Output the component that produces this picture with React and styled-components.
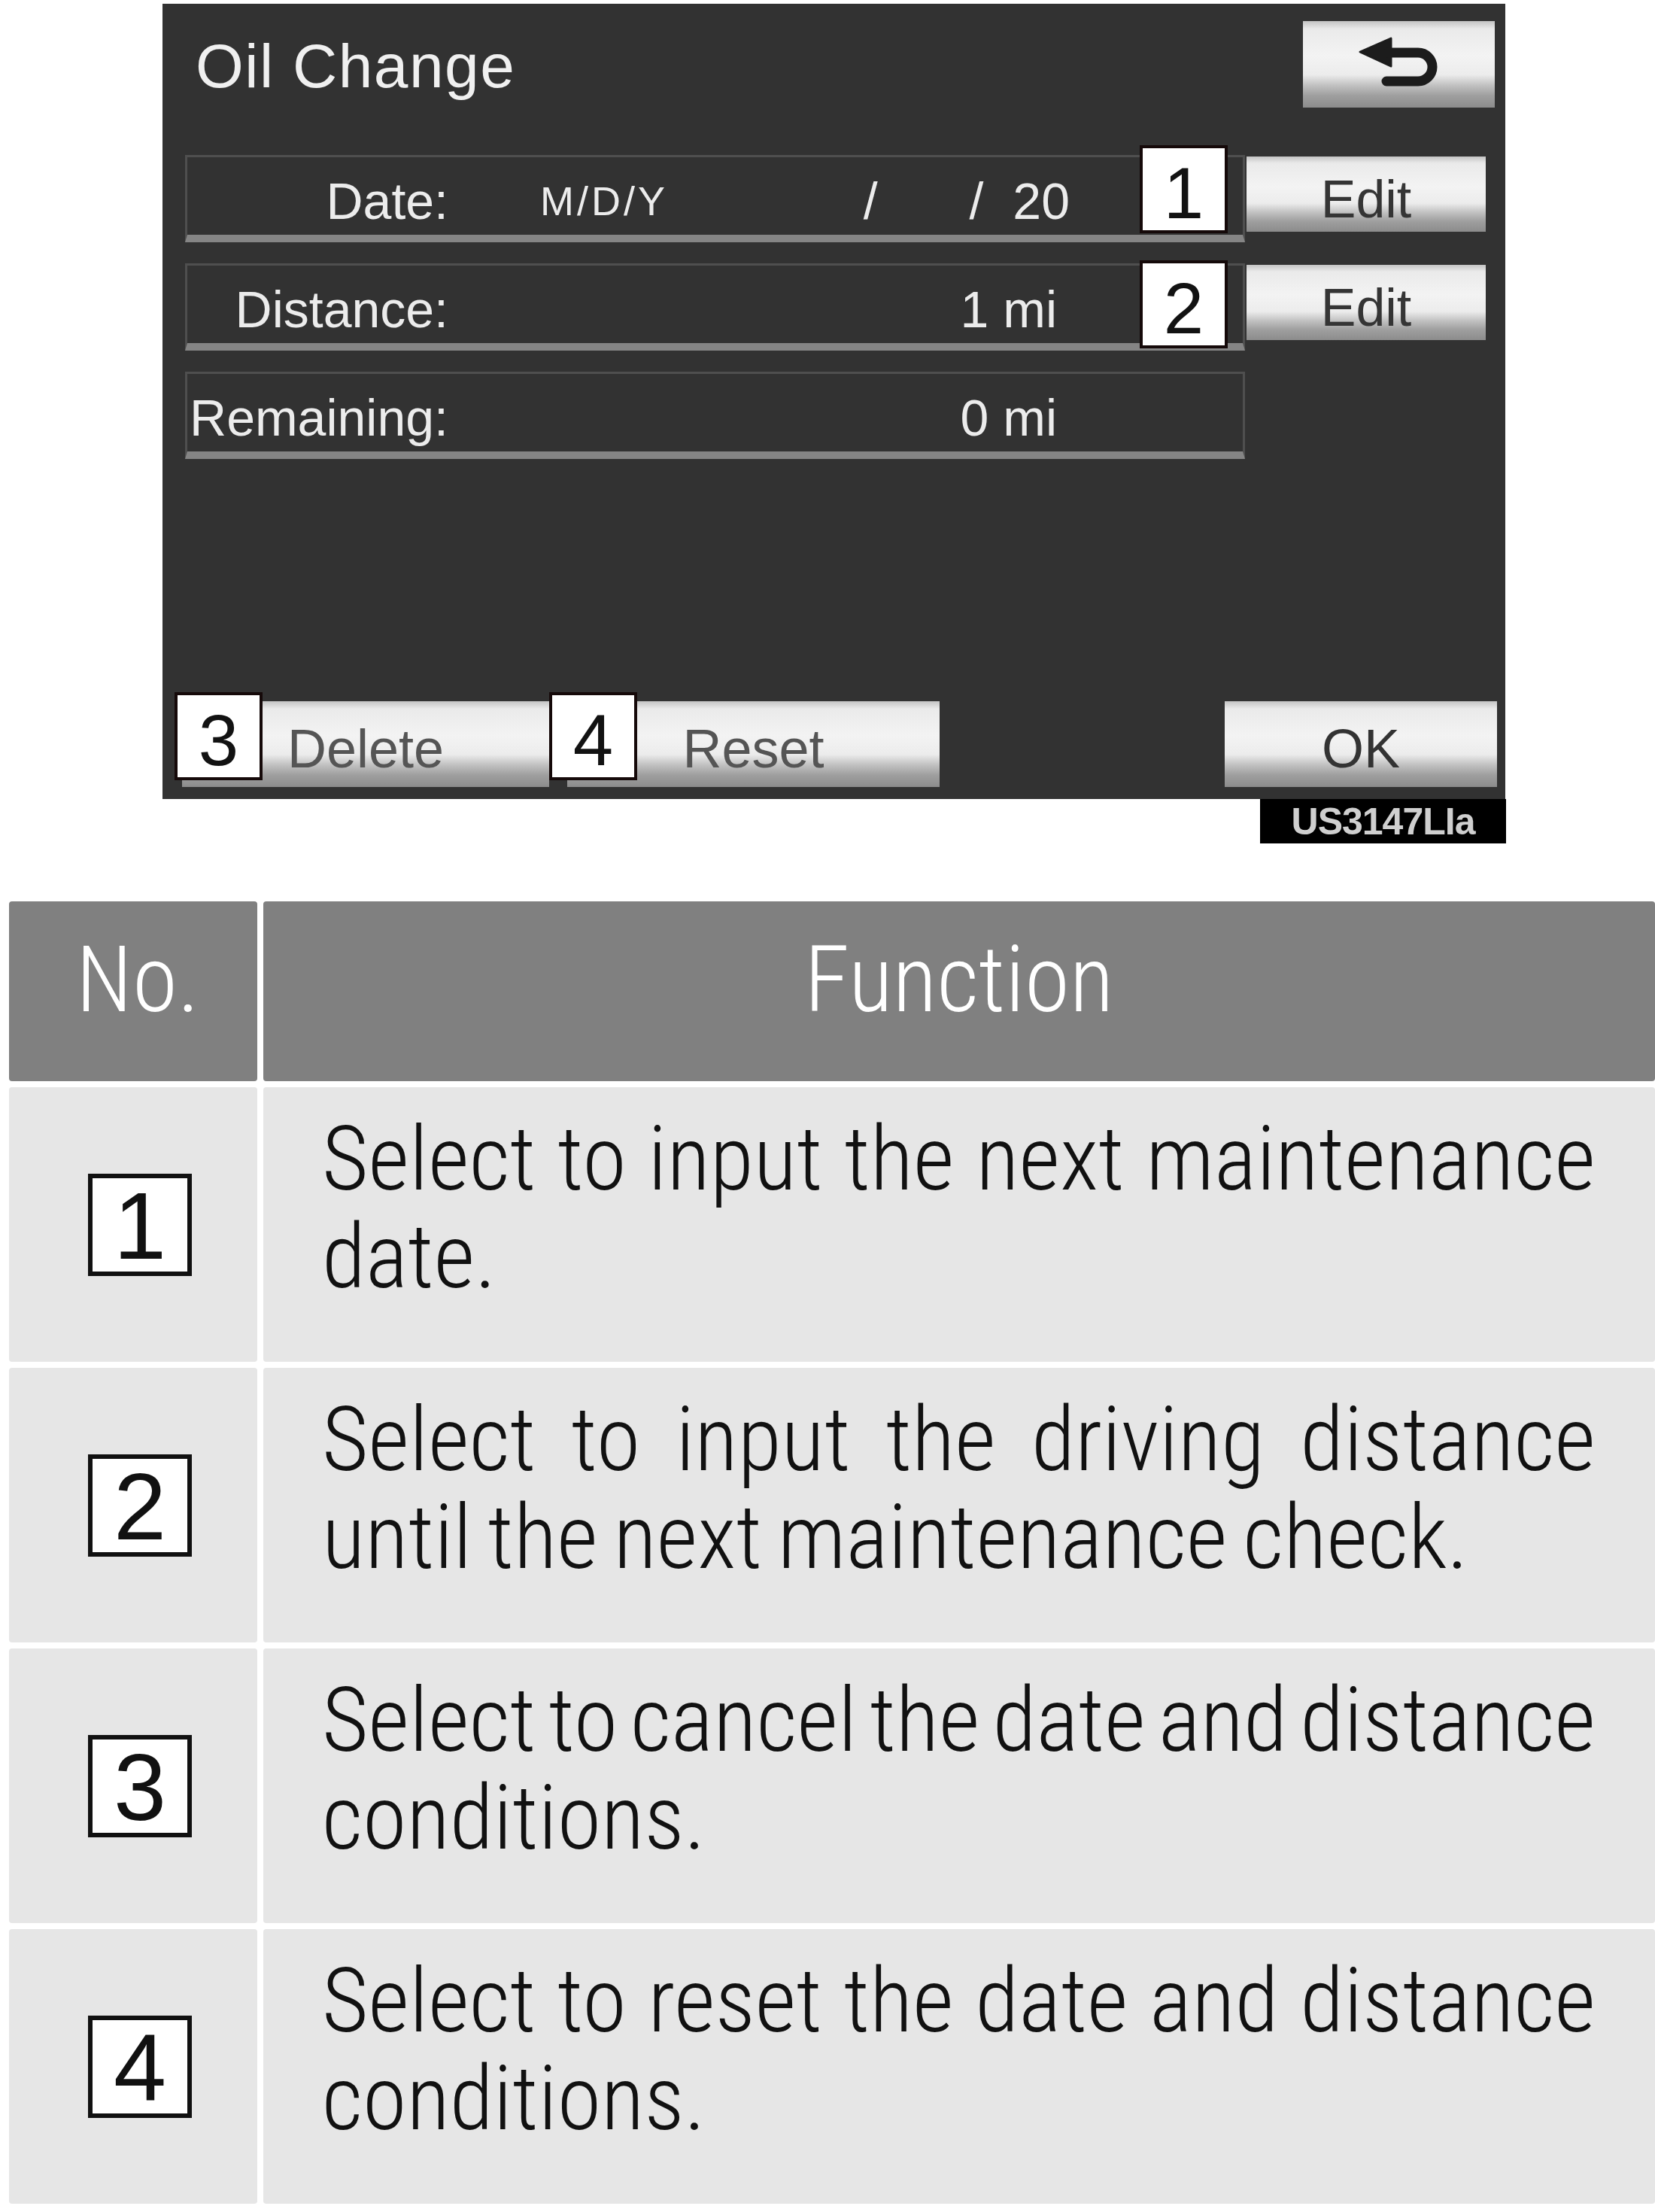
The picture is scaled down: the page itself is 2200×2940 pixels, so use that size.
import React from 'react';
import styled, { createGlobalStyle } from 'styled-components';

const GlobalStyle = createGlobalStyle`
  html, body {
    margin: 0;
    padding: 0;
    background: #ffffff;
  }
`;

const fields = [
  { id: 1, label: 'Date:', kind: 'date', badgeTop: -13 },
  { id: 2, label: 'Distance:', value: '1 mi', badgeTop: -4 },
  { id: 3, label: 'Remaining:', value: '0 mi' },
];

const rows = [
  { no: 1, lines: ['Select to input the next maintenance', 'date.'] },
  { no: 2, lines: ['Select to input the driving distance', 'until the next maintenance check.'] },
  { no: 3, lines: ['Select to cancel the date and distance', 'conditions.'] },
  { no: 4, lines: ['Select to reset the date and distance', 'conditions.'] },
];

const BackArrow = () => (
  <svg width="110" height="68" viewBox="0 0 110 68">
    <polygon
      points="3,20 44,2 44,39"
      fill="#1c1c1c"
      stroke="#1c1c1c"
      strokeWidth="3"
      strokeLinejoin="round"
    />
    <path
      d="M40 21 H80 A19 19 0 0 1 80 59 H38"
      fill="none"
      stroke="#1c1c1c"
      strokeWidth="13"
      strokeLinecap="round"
    />
  </svg>
);

const App = () => {
  return (
    <Page>
      <GlobalStyle />
      <Figure>
        <Screen>
          <ScreenHeader>
            <Title>Oil Change</Title>
            <BackButton>
              <BackArrow />
            </BackButton>
          </ScreenHeader>

          <Fields>
            {fields.map(f => (
              <FieldLine key={f.id}>
                <Field>
                  <FieldLabel>{f.label}</FieldLabel>
                  {f.kind === 'date' ? (
                    <>
                      <DateFormat>M/D/Y</DateFormat>
                      <Slash>/</Slash>
                      <Year>/ 20</Year>
                    </>
                  ) : (
                    <FieldValue>{f.value}</FieldValue>
                  )}
                </Field>
                {f.badgeTop !== undefined && (
                  <>
                    <Badge $left={1269} $top={f.badgeTop}>
                      {f.id}
                    </Badge>
                    <EditButton>Edit</EditButton>
                  </>
                )}
              </FieldLine>
            ))}
          </Fields>

          <Footer>
            <SoftKey $width={488}>
              <Badge $left={-10} $top={-12}>
                3
              </Badge>
              Delete
            </SoftKey>
            <SoftKey $width={495} $gap={24}>
              <Badge $left={-24} $top={-12}>
                4
              </Badge>
              Reset
            </SoftKey>
            <SoftKey $width={362} $dark $push>
              OK
            </SoftKey>
          </Footer>
        </Screen>
        <Caption>US3147LIa</Caption>
      </Figure>

      <Table>
        <HeadCell $no>No.</HeadCell>
        <HeadCell>Function</HeadCell>
        {rows.map(r => (
          <React.Fragment key={r.no}>
            <NoCell>
              <NoBox>{r.no}</NoBox>
            </NoCell>
            <TextCell>
              {r.lines.map((line, i) => (
                <Line key={i} $full={i < r.lines.length - 1}>
                  {line}
                </Line>
              ))}
            </TextCell>
          </React.Fragment>
        ))}
      </Table>
    </Page>
  );
};

export default App;

const keyGradient = `linear-gradient(
  180deg,
  #c4c4c4 0%,
  #eaeaea 9%,
  #f3f3f3 40%,
  #ececec 62%,
  #c2c2c2 74%,
  #9f9f9f 86%,
  #8c8c8c 100%
)`;

const Page = styled.div`
  width: 2200px;
  height: 2940px;
  overflow: hidden;
  font-family: 'Liberation Sans', Arial, sans-serif;
`;

const Figure = styled.div`
  width: 1786px;
  margin: 5px 0 0 216px;
  display: flex;
  flex-direction: column;
  align-items: flex-end;
`;

const Screen = styled.div`
  align-self: flex-start;
  box-sizing: border-box;
  width: 1785px;
  height: 1057px;
  background: #323232;
  display: flex;
  flex-direction: column;
`;

const ScreenHeader = styled.div`
  display: flex;
  justify-content: space-between;
  align-items: flex-start;
  padding: 23px 14px 0 44px;
`;

const Title = styled.h1`
  margin: 20px 0 0;
  font-size: 82px;
  line-height: 80px;
  font-weight: 400;
  letter-spacing: 1.5px;
  color: #f0f0f0;
`;

const BackButton = styled.div`
  box-sizing: border-box;
  width: 255px;
  height: 115px;
  padding-bottom: 6px;
  display: flex;
  align-items: center;
  justify-content: center;
  background: ${keyGradient};
`;

const Fields = styled.div`
  display: flex;
  flex-direction: column;
  gap: 28px;
  margin-top: 63px;
  padding-left: 30px;
`;

const FieldLine = styled.div`
  position: relative;
  display: flex;
  align-items: flex-start;
`;

const Field = styled.div`
  box-sizing: border-box;
  width: 1409px;
  height: 116px;
  padding-top: 13px;
  border: 3px solid #4f4f4f;
  border-bottom: 10px solid #858585;
  display: flex;
  align-items: center;
  color: #ececec;
  font-size: 68px;
  line-height: 68px;
  white-space: nowrap;
`;

const FieldLabel = styled.span`
  width: 347px;
  flex-shrink: 0;
  text-align: right;
`;

const FieldValue = styled.span`
  margin-left: auto;
  margin-right: 247px;
`;

const DateFormat = styled.span`
  margin-left: 122px;
  font-size: 54px;
  letter-spacing: 4px;
`;

const Slash = styled.span`
  margin-left: auto;
  margin-right: 122px;
`;

const Year = styled.span`
  margin-right: 230px;
  word-spacing: 20px;
`;

const EditButton = styled.div`
  box-sizing: border-box;
  width: 318px;
  height: 100px;
  margin: 2px 0 0 2px;
  padding-top: 14px;
  display: flex;
  align-items: center;
  justify-content: center;
  background: ${keyGradient};
  color: #353535;
  font-size: 70px;
`;

const Badge = styled.div`
  position: absolute;
  left: ${p => p.$left}px;
  top: ${p => p.$top}px;
  box-sizing: border-box;
  width: 117px;
  height: 117px;
  padding-top: 10px;
  border: 4px solid #150909;
  background: #ffffff;
  display: flex;
  align-items: center;
  justify-content: center;
  color: #121212;
  font-size: 96px;
  line-height: 96px;
`;

const Footer = styled.div`
  margin-top: auto;
  display: flex;
  align-items: flex-start;
  padding: 0 11px 16px 26px;
`;

const SoftKey = styled.div`
  position: relative;
  box-sizing: border-box;
  width: ${p => p.$width}px;
  height: 114px;
  margin-left: ${p => (p.$push ? 'auto' : `${p.$gap || 0}px`)};
  padding-top: 12px;
  display: flex;
  align-items: center;
  justify-content: center;
  background: ${keyGradient};
  color: ${p => (p.$dark ? '#333333' : '#555555')};
  font-size: 72px;
`;

const Caption = styled.div`
  box-sizing: border-box;
  width: 327px;
  height: 59px;
  display: flex;
  align-items: center;
  justify-content: center;
  background: #000000;
  color: #cfcfcf;
  font-size: 50px;
  font-weight: 700;
  letter-spacing: -1px;
`;

const Table = styled.div`
  margin: 77px 0 0 12px;
  display: grid;
  grid-template-columns: 330px 1850px;
  grid-template-rows: 239px repeat(4, 365px);
  gap: 8px;
  font-family: 'Noto Sans Condensed', 'Roboto Condensed', 'Noto Sans', 'Liberation Sans', sans-serif;
  font-stretch: condensed;
  font-weight: 300;
`;

const HeadCell = styled.div`
  box-sizing: border-box;
  padding: 40px 0 0 ${p => (p.$no ? 12 : 0)}px;
  border-radius: 4px;
  background: #808080;
  color: #ffffff;
  text-align: center;
  font-size: 122px;
  line-height: 130px;
`;

const NoCell = styled.div`
  box-sizing: border-box;
  padding-left: 18px;
  border-radius: 4px;
  background: #e6e6e6;
  display: flex;
  align-items: center;
  justify-content: center;
`;

const NoBox = styled.div`
  box-sizing: border-box;
  width: 138px;
  height: 136px;
  padding-top: 4px;
  border: 6px solid #111111;
  background: #ffffff;
  display: flex;
  align-items: center;
  justify-content: center;
  font-family: 'Liberation Sans', Arial, sans-serif;
  font-stretch: normal;
  font-weight: 400;
  color: #111111;
  font-size: 126px;
  line-height: 126px;
`;

const TextCell = styled.div`
  box-sizing: border-box;
  padding: 31px 79px 0 78px;
  border-radius: 4px;
  background: #e6e6e6;
  color: #111111;
  font-size: 119px;
  line-height: 130px;
`;

const Line = styled.span`
  display: block;
  white-space: nowrap;
  word-spacing: ${p => (p.$full ? -12 : -6)}px;
  text-align: ${p => (p.$full ? 'justify' : 'left')};
  text-align-last: ${p => (p.$full ? 'justify' : 'auto')};
`;
